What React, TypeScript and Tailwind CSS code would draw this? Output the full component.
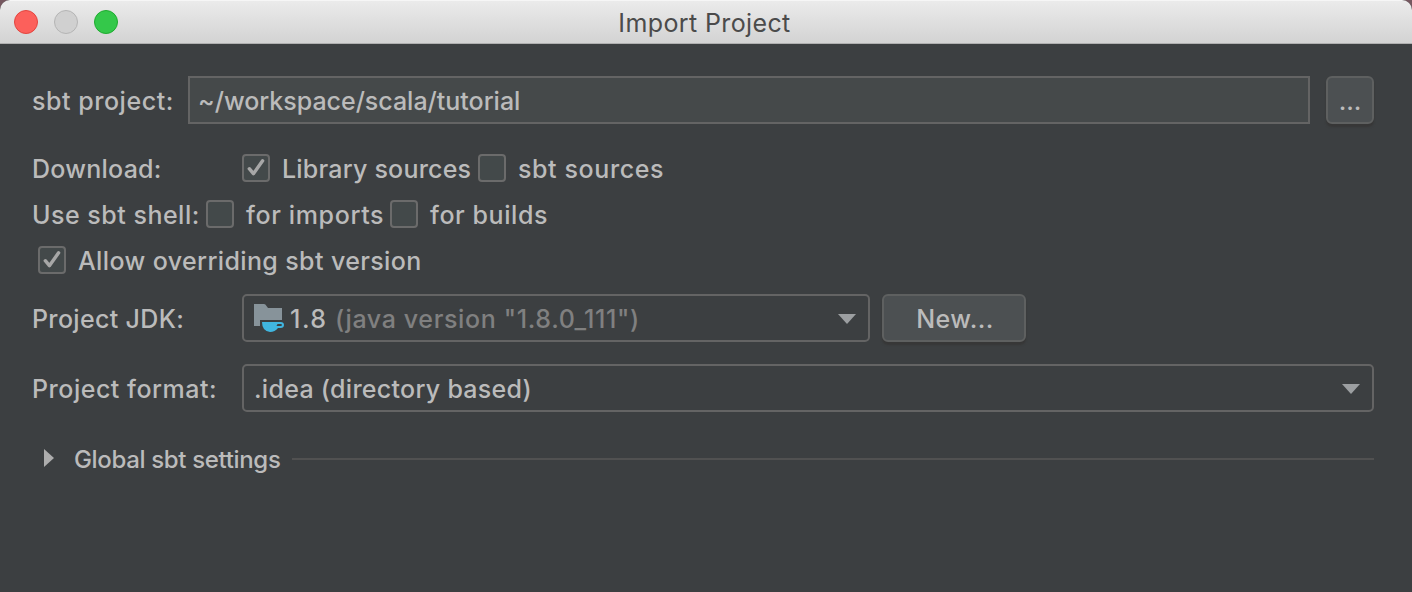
import type { ReactNode } from "react";

function Label({ className = "", children }: { className?: string; children: ReactNode }) {
  return <span className={`block shrink-0 pt-0.5 whitespace-nowrap ${className}`}>{children}</span>;
}

function CheckBox({ checked = false }: { checked?: boolean }) {
  return (
    <span
      role="checkbox"
      aria-checked={checked}
      className="flex size-7 shrink-0 rounded-[4px] border-2 border-[#6b6b6b] bg-[#43494a]"
    >
      {checked && (
        <svg viewBox="0 0 24 24" className="size-6" fill="none" stroke="#a7a7a7" strokeWidth="3.4">
          <path d="M5.3 12.700L9.4 17.700L18.600 4.800" strokeLinecap="round" strokeLinejoin="round" />
        </svg>
      )}
    </span>
  );
}

function ComboArrow() {
  return (
    <svg viewBox="0 0 18 10" className="mt-0.5 h-[10px] w-[18px] shrink-0">
      <path d="M0 0H18L9 10Z" fill="#9c9fa1" />
    </svg>
  );
}

function JdkIcon() {
  return (
    <svg viewBox="0 0 32 30" className="h-[30px] w-8 shrink-0">
      <path d="M0 1H10Q11.500 1 12.500 3L14 5H28V17H6V23H0Z" fill="#87939a" />
      <path
        d="M8 19H26.500Q30 19 30 22Q30 25 26.500 25H24Q21 29 16 29Q8 28 8 19ZM23.500 21L22.500 23H26.500Q28 23 28 22Q28 21 26.500 21Z"
        fill="#40b6e0"
        fillRule="evenodd"
      />
    </svg>
  );
}

export default function App() {
  return (
    <div className="h-[592px] w-[1412px] overflow-hidden bg-[#75575f] font-['Inter',sans-serif] text-[25px] leading-[30px] font-[450] text-[#bbbbbb]">
      <div className="flex h-full flex-col overflow-hidden rounded-t-[10px] bg-[#3c3f41]">
        <header className="grid h-11 shrink-0 grid-cols-[1fr_auto_1fr] items-center border-t border-b border-t-[#f6f6f6] border-b-[#b0b0b0] bg-linear-to-b from-[#ebebeb] to-[#d3d3d3]">
          <div className="flex gap-4 pl-[14px]">
            <span className="size-6 rounded-full border border-[#e2453f] bg-[#fc605b]" />
            <span className="size-6 rounded-full border border-[#b4b4b4] bg-[#d0d0d0]" />
            <span className="size-6 rounded-full border border-[#1fab30] bg-[#34c84a]" />
          </div>
          <Label className="pr-[3px] font-normal tracking-[0.38px] text-[#4b4b4b]">Import Project</Label>
        </header>
        <main className="flex flex-col pt-8 pr-[38px] pl-8">
          <div className="flex h-12 items-center">
            <Label className="w-[156px] tracking-[0.54px]">sbt project:</Label>
            <div className="flex h-12 flex-1 items-center border-2 border-[#646464] bg-[#45494a] pl-2">
              <Label className="tracking-[-0.02px]">~/workspace/scala/tutorial</Label>
            </div>
            <button className="ml-4 flex h-12 w-12 items-center justify-center rounded-[6px] border-2 border-[#5e6060] bg-[#4c5052] shadow-[0_3px_2px_#373737]">
              <Label>...</Label>
            </button>
          </div>
          <div className="mt-[21px] flex h-[46px] items-center">
            <Label className="w-[210px] tracking-[0.25px]">Download:</Label>
            <CheckBox checked />
            <Label className="ml-3 w-[196px] tracking-[0.21px]">Library sources</Label>
            <CheckBox />
            <Label className="ml-3 tracking-[0.6px]">sbt sources</Label>
          </div>
          <div className="flex h-[46px] items-center">
            <Label className="w-[174px] tracking-[0.5px]">Use sbt shell:</Label>
            <CheckBox />
            <Label className="ml-3 w-[144px] tracking-[0.64px]">for imports</Label>
            <CheckBox />
            <Label className="ml-3 tracking-[0.58px]">for builds</Label>
          </div>
          <div className="flex h-[46px] items-center pl-1.5">
            <CheckBox checked />
            <Label className="ml-3 tracking-[0.38px]">Allow overriding sbt version</Label>
          </div>
          <div className="mt-[11px] flex h-12 items-center">
            <Label className="w-[210px] tracking-[0.33px]">Project JDK:</Label>
            <div className="flex h-12 w-[628px] items-center rounded-[5px] border-2 border-[#646464] pr-3 pl-[10px]">
              <JdkIcon />
              <Label className="ml-1 w-[45px] tracking-[1.5px]">1.8</Label>
              <Label className="tracking-[0.64px] text-[#808080]">(java version "1.8.0_111")</Label>
              <span className="flex-1" />
              <ComboArrow />
            </div>
            <button className="ml-3 flex h-12 w-36 items-center justify-center rounded-[6px] border-2 border-[#5e6060] bg-[#4c5052] shadow-[0_3px_2px_#373737]">
              <Label className="pl-0.5 tracking-[0.45px]">New...</Label>
            </button>
          </div>
          <div className="mt-[22px] flex h-12 items-center">
            <Label className="w-[210px] tracking-[0.52px]">Project format:</Label>
            <div className="flex h-12 flex-1 items-center justify-between rounded-[5px] border-2 border-[#646464] pr-3 pl-[10px]">
              <Label className="tracking-[0.28px]">.idea (directory based)</Label>
              <ComboArrow />
            </div>
          </div>
          <div className="mt-[31px] flex h-8 items-center pl-3">
            <svg viewBox="0 0 10 18" className="mb-0.5 h-[18px] w-[10px]">
              <path d="M0 0L10 9L0 18Z" fill="#adadad" />
            </svg>
            <Label className="ml-5 w-[218px] text-2xl tracking-[-0.34px]">Global sbt settings</Label>
            <span className="h-0.5 flex-1 bg-[#515151]" />
          </div>
        </main>
      </div>
    </div>
  );
}
